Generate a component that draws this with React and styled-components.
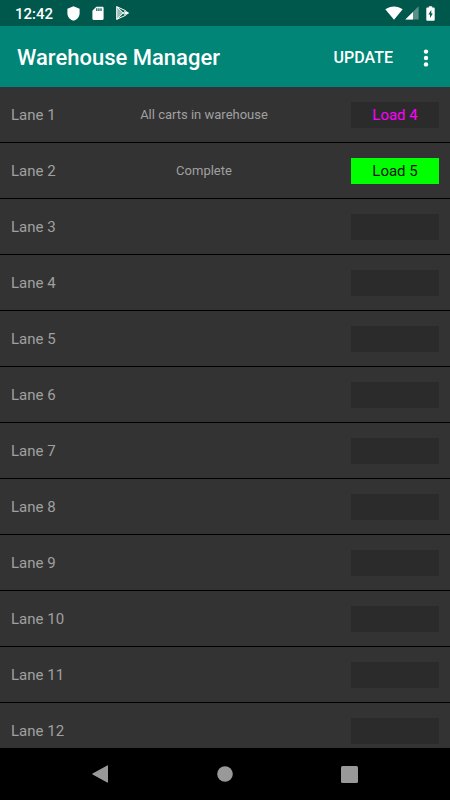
import styled, { createGlobalStyle } from "styled-components";

const GlobalStyle = createGlobalStyle`
  * {
    box-sizing: border-box;
  }

  body {
    margin: 0;
    background: #303030;
    font-family: Roboto, "Liberation Sans", sans-serif;
  }

  button {
    border: none;
    margin: 0;
    padding: 0;
    background: none;
    color: inherit;
    font-family: inherit;
    cursor: pointer;
  }

  svg {
    display: block;
  }
`;

const Screen = styled.div`
  display: flex;
  flex-direction: column;
  height: 100vh;
  overflow: hidden;
`;

const StatusBar = styled.div`
  flex: none;
  display: flex;
  align-items: center;
  justify-content: space-between;
  height: 26px;
  padding: 0 15px;
  background: #00574b;
  color: white;
`;

const StatusGroup = styled.div`
  display: flex;
  align-items: center;
  gap: ${({ $gap }) => $gap}px;
`;

const Clock = styled.time`
  margin-right: 2px;
  padding-top: 2px;
  font-size: 15px;
  font-weight: 500;
  line-height: 24px;
`;

const AppBar = styled.header`
  flex: none;
  display: flex;
  align-items: center;
  height: 61px;
  padding: 2px 14px 0 17px;
  background: #008577;
  color: white;
`;

const Title = styled.h1`
  flex: 1;
  margin: 0;
  font-size: 22px;
  font-weight: 500;
`;

const UpdateButton = styled.button`
  font-size: 16px;
  font-weight: 500;
`;

const MenuButton = styled.button`
  margin-left: 23px;
`;

const LaneList = styled.ul`
  flex: 1;
  min-height: 0;
  margin: 0;
  padding: 0;
  overflow: hidden;
  list-style: none;
  background: #333333;
`;

const LaneRow = styled.li`
  display: grid;
  grid-template-columns: 58px 1fr 88px;
  align-items: center;
  height: 56px;
  padding: 0 11px;
  border-bottom: 1px solid black;
  color: #a0a0a0;
`;

const LaneName = styled.span`
  font-size: 15px;
`;

const LaneStatus = styled.span`
  padding-right: 12px;
  font-size: 13px;
  text-align: center;
`;

const LoadButton = styled.button`
  height: 26px;
  background: ${({ $background }) => $background || "#2b2b2b"};
  color: ${({ $color }) => $color || "inherit"};
  font-size: 15px;
`;

const NavBar = styled.nav`
  flex: none;
  display: grid;
  grid-template-columns: repeat(3, 1fr);
  height: 52px;
  padding: 0 38px;
  background: black;
  color: #999999;
`;

const NavButton = styled.button`
  display: flex;
  align-items: center;
  justify-content: center;
`;

const lanes = [
  { status: "All carts in warehouse", load: "Load 4", color: "#ff00ff" },
  { status: "Complete", load: "Load 5", color: "#111111", background: "#00ff00" },
  ...Array.from({ length: 10 }, () => ({})),
];

const ShieldIcon = () => (
  <svg width="13" height="15" viewBox="0 0 13 15" fill="currentColor">
    <path d="M6.5 0.3L12.6 2.7V7.2C12.6 10.8 10 13.7 6.5 14.8C3 13.7 0.4 10.8 0.4 7.2V2.7Z" />
  </svg>
);

const SdCardIcon = () => (
  <svg width="12" height="15" viewBox="0 0 12 15" fill="currentColor">
    <path
      fillRule="evenodd"
      d="M4.3 0.8H10.4C11.1 0.8 11.6 1.3 11.6 2V12.8C11.6 13.5 11.1 14 10.4 14H1.6C0.9 14 0.4 13.5 0.4 12.8V4.7ZM4.2 2.3V5H5.4V2.3ZM6.3 2.3V5H7.5V2.3ZM8.4 2.3V5H9.6V2.3Z"
    />
  </svg>
);

const PlayStoreIcon = () => (
  <svg width="14" height="14" viewBox="0 0 14 14" fill="none">
    <path d="M0.7 0.6V13.4L7.3 7Z" fill="currentColor" fillOpacity="0.6" />
    <path
      d="M0.7 0.6V13.4M0.7 0.6L9.6 9.3M0.7 13.4L9.6 4.7M0.7 0.6L9.6 4.7M0.7 13.4L9.6 9.3"
      stroke="currentColor"
    />
    <path d="M10 4.9L13.3 7L10 9.1L7.9 7Z" fill="currentColor" />
  </svg>
);

const WifiIcon = () => (
  <svg width="18" height="14" viewBox="0 0 18 14" fill="currentColor">
    <path d="M0.3 3.3C5.3 -0.6 12.7 -0.6 17.7 3.3L9 13.7Z" />
  </svg>
);

const SignalIcon = () => (
  <svg width="14" height="14" viewBox="0 0 14 14" fill="currentColor">
    <path d="M0.3 13.6L13.6 0.3V13.6Z" fillOpacity="0.35" />
    <path d="M0.3 13.6L8 5.9V13.6Z" />
  </svg>
);

const BatteryIcon = () => (
  <svg width="9" height="15" viewBox="0 0 9 15" fill="currentColor">
    <path
      fillRule="evenodd"
      d="M2.8 0.3H6.2V1.6H7.9C8.3 1.6 8.7 2 8.7 2.4V13.9C8.7 14.3 8.3 14.7 7.9 14.7H1.1C0.7 14.7 0.3 14.3 0.3 13.9V2.4C0.3 2 0.7 1.6 1.1 1.6H2.8ZM5.3 4L2.4 8.6H4V12L6.8 7.4H5.3Z"
    />
  </svg>
);

const App = () => {
  return (
    <>
      <GlobalStyle />
      <Screen>
        <StatusBar>
          <StatusGroup $gap={12}>
            <Clock>12:42</Clock>
            <ShieldIcon />
            <SdCardIcon />
            <PlayStoreIcon />
          </StatusGroup>
          <StatusGroup $gap={2}>
            <WifiIcon />
            <StatusGroup $gap={7}>
              <SignalIcon />
              <BatteryIcon />
            </StatusGroup>
          </StatusGroup>
        </StatusBar>
        <AppBar>
          <Title>Warehouse Manager</Title>
          <UpdateButton>UPDATE</UpdateButton>
          <MenuButton aria-label="More options">
            <svg width="20" height="20" viewBox="0 0 20 20" fill="currentColor">
              <circle cx="10" cy="3.6" r="2.2" />
              <circle cx="10" cy="10" r="2.2" />
              <circle cx="10" cy="16.4" r="2.2" />
            </svg>
          </MenuButton>
        </AppBar>
        <LaneList>
          {lanes.map((lane, index) => (
            <LaneRow key={index}>
              <LaneName>Lane {index + 1}</LaneName>
              <LaneStatus>{lane.status}</LaneStatus>
              <LoadButton
                aria-label={lane.load || `Lane ${index + 1} load`}
                $color={lane.color}
                $background={lane.background}
              >
                {lane.load}
              </LoadButton>
            </LaneRow>
          ))}
        </LaneList>
        <NavBar>
          <NavButton aria-label="Back">
            <svg width="18" height="18" viewBox="0 0 18 18" fill="currentColor">
              <path d="M16.2 0.4C16.6 0.2 17 0.4 17 0.9V17.1C17 17.6 16.6 17.8 16.2 17.6L1.6 9.4C1.2 9.2 1.2 8.8 1.6 8.6Z" />
            </svg>
          </NavButton>
          <NavButton aria-label="Home">
            <svg width="16" height="16" viewBox="0 0 16 16" fill="currentColor">
              <circle cx="8" cy="8" r="7.8" />
            </svg>
          </NavButton>
          <NavButton aria-label="Recent apps">
            <svg width="17" height="17" viewBox="0 0 17 17" fill="currentColor">
              <rect width="17" height="17" rx="1.5" />
            </svg>
          </NavButton>
        </NavBar>
      </Screen>
    </>
  );
};

export default App;
